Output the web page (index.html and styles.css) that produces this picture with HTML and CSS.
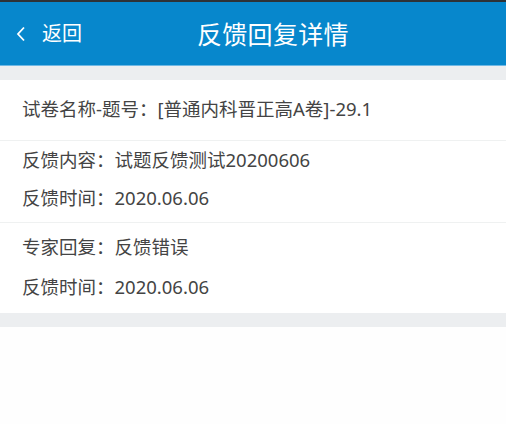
FILE: index.html
```html
<!DOCTYPE html>
<html lang="zh">
<head>
<meta charset="utf-8">
<title>反馈回复详情</title>
<link rel="stylesheet" href="styles.css">
</head>
<body>
<div class="statusbar"></div>
<header class="topbar">
  <div class="back">
    <svg class="chev" width="12" height="18" viewBox="0 0 12 18"><path d="M9 2.5 L3 9 L9 15.5" fill="none" stroke="#fff" stroke-width="1.8"/></svg>
    <span class="back-text">返回</span>
  </div>
  <h1 class="title">反馈回复详情</h1>
</header>
<div class="gap"></div>
<main class="card">
  <section class="sec sec-a">
    <p class="line">试卷名称-题号：[普通内科晋正高A卷]-29.1</p>
  </section>
  <section class="sec sec-b">
    <p class="line">反馈内容：试题反馈测试20200606</p>
    <p class="line">反馈时间：2020.06.06</p>
  </section>
  <section class="sec sec-c">
    <p class="line">专家回复：反馈错误</p>
    <p class="line">反馈时间：2020.06.06</p>
  </section>
</main>
<div class="gap gap-bottom"></div>
</body>
</html>
```
FILE: styles.css
```css
* { box-sizing: border-box; }
html, body {
  margin: 0;
  padding: 0;
  background: #fefefe;
  font-family: "Noto Sans", "Noto Sans CJK SC", sans-serif;
}
.statusbar {
  height: 2px;
  background: #2e3236;
}
.topbar {
  height: 64px;
  background: #0787cc;
  border-bottom: 1px solid #6fb8e4;
  display: flex;
  align-items: center;
  color: #fff;
}
.back {
  display: flex;
  align-items: center;
  padding-left: 15px;
}
.chev { display: block; }
.back-text {
  margin-left: 15px;
  font-size: 20px;
  line-height: 24px;
}
.title {
  margin: 0 0 0 115px;
  font-size: 25px;
  font-weight: normal;
  line-height: 30px;
  letter-spacing: 0.3px;
}
.gap {
  height: 14px;
  background: #eceef0;
}
.card {
  background: #fff;
}
.sec {
  border-bottom: 1px solid #eff1f1;
  padding: 0 22px;
}
.sec:last-child { border-bottom: none; }
.line {
  margin: 0;
  font-size: 18.5px;
  line-height: 38px;
  color: #444;
}
.sec-a {
  height: 61px;
  display: flex;
  align-items: center;
  padding-bottom: 2px;
}
.sec-b {
  padding-top: 0;
  padding-bottom: 5px;
}
.sec-c {
  padding-top: 5px;
  padding-bottom: 7px;
  display: flex;
  flex-direction: column;
  gap: 2px;
}
.gap-bottom { height: 14px; }
```
